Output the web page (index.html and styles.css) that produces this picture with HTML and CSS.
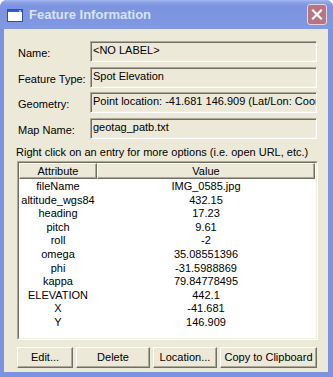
FILE: index.html
```html
<!DOCTYPE html>
<html lang="en">
<head>
    <meta charset="UTF-8">
    <title>Feature Information</title>
    <link rel="stylesheet" href="styles.css">
</head>
<body>

    <div class="window">
        <div class="titlebar">
            <svg class="app-icon" width="16" height="13" viewBox="0 0 16 13">
                <rect x="0.5" y="0.5" width="15" height="12" fill="#fff" stroke="#2b4fb8"/>
                <rect x="1" y="1" width="14" height="2" fill="#2b5fd9"/>
                <rect x="12" y="1.5" width="2" height="1" fill="#fff"/>
            </svg>
            <span class="title">Feature Information</span>
            <div class="close-btn">
                <svg width="20" height="21" viewBox="0 0 20 21">
                    <path d="M6 6.5 L14 14.5 M14 6.5 L6 14.5" stroke="#fff" stroke-width="2.2" stroke-linecap="square"/>
                </svg>
            </div>
        </div>

        <div class="client">
            <div class="fields">
                <label class="lbl">Name:</label>
                <div class="field">&lt;NO LABEL&gt;</div>
                <label class="lbl">Feature Type:</label>
                <div class="field">Spot Elevation</div>
                <label class="lbl">Geometry:</label>
                <div class="field">Point location: -41.681 146.909 (Lat/Lon: Coor</div>
                <label class="lbl">Map Name:</label>
                <div class="field">geotag_patb.txt</div>
            </div>

            <p class="hint">Right click on an entry for more options (i.e. open URL, etc.)</p>

            <div class="list">
                <div class="list-inner">
                    <div class="list-head">
                        <div class="col-head col-attr">Attribute</div>
                        <div class="col-head col-val">Value</div>
                    </div>
                    <div class="list-rows">
                        <div>fileName</div><div>IMG_0585.jpg</div>
                        <div>altitude_wgs84</div><div>432.15</div>
                        <div>heading</div><div>17.23</div>
                        <div>pitch</div><div>9.61</div>
                        <div>roll</div><div>-2</div>
                        <div>omega</div><div>35.08551396</div>
                        <div>phi</div><div>-31.5988869</div>
                        <div>kappa</div><div>79.84778495</div>
                        <div>ELEVATION</div><div>442.1</div>
                        <div>X</div><div>-41.681</div>
                        <div>Y</div><div>146.909</div>
                    </div>
                </div>
            </div>

            <div class="buttons">
                <button class="btn btn-edit">Edit...</button>
                <button class="btn btn-delete">Delete</button>
                <button class="btn btn-location">Location...</button>
                <button class="btn btn-copy">Copy to Clipboard</button>
            </div>
        </div>
    </div>

</body>
</html>
```

FILE: styles.css
```css
body {
    margin: 0;
    font-family: "Liberation Sans", Arial, sans-serif;
    font-size: 11px;
    color: #000;
    background: #fff;
}
.window {
    width: 333px;
    height: 377px;
    background: #7d93df; /* inactive XP frame */
    border-radius: 7px 7px 0 0;
    display: flex;
    flex-direction: column;
    overflow: hidden;
}
.titlebar {
    height: 29px;
    flex: none;
    display: flex;
    align-items: center;
    padding: 0 6px 0 7px;
    background: linear-gradient(#a9baf0 0, #8ea3e8 2px, #7c93df 6px, #7f96e1 22px, #8399e3 29px);
}
.app-icon {
    flex: none;
    margin-top: 1px;
}
.title {
    flex: 1;
    margin-left: 6px;
    font-size: 13px;
    font-weight: bold;
    color: #d8e2f8;
    white-space: nowrap;
}
.close-btn {
    width: 20px;
    height: 21px;
    border: 1px solid #e4d4e4;
    border-radius: 3px;
    box-sizing: border-box;
    background: #b97482;
    display: flex;
    align-items: center;
    justify-content: center;
}
.close-btn svg {
    display: block;
    margin: -1px;
}
.client {
    flex: 1;
    margin: 0 5px 5px 4px;
    background: #ece9d8;
    padding-top: 12px;
    display: flex;
    flex-direction: column;
}
.fields {
    display: grid;
    grid-template-columns: 72px 227px;
    grid-template-rows: repeat(4, 21px);
    row-gap: 4.67px;
    padding-left: 14px;
}
.lbl {
    padding-top: 6px;
    line-height: 13px;
    white-space: nowrap;
}
.field {
    box-sizing: border-box;
    height: 21px;
    padding: 2px 2px 0 2px;
    line-height: 13px;
    border: 1px solid;
    border-color: #aca899 #fff #fff #aca899;
    box-shadow: inset 1px 1px #716f64, inset -1px -1px #f1efe2;
    white-space: nowrap;
    overflow: hidden;
}
.hint {
    margin: 7px 0 0 12px;
    line-height: 13px;
    white-space: nowrap;
}
.list {
    margin: 2px 0 0 13px;
    width: 301px;
    height: 179px;
    box-sizing: border-box;
    border: 1px solid;
    border-color: #aca899 #fff #fff #aca899;
}
.list-inner {
    height: 100%;
    box-sizing: border-box;
    border: 1px solid;
    border-color: #716f64 #f1efe2 #f1efe2 #716f64;
    background: #fff;
}
.list-head {
    display: flex;
    height: 16px;
}
.col-head {
    box-sizing: border-box;
    height: 16px;
    line-height: 14px;
    text-align: center;
    background: #ece9d8;
    border: 1px solid;
    border-color: #fff #716f64 #716f64 #fff;
    box-shadow: inset -1px -1px #aca899;
}
.col-attr {
    width: 78px;
}
.col-val {
    width: 218px;
}
.list-rows {
    display: grid;
    grid-template-columns: 78px 218px;
    grid-auto-rows: 13.6px;
    padding-top: 1px;
    line-height: 13.6px;
    text-align: center;
    white-space: nowrap;
}
.buttons {
    display: flex;
    gap: 3px;
    margin: 7px 0 0 13px;
}
.btn {
    height: 21px;
    padding: 0;
    font-family: "Liberation Sans", Arial, sans-serif;
    font-size: 11px;
    color: #000;
    background: #ece9d8;
    border: 1px solid;
    border-color: #fff #716f64 #716f64 #fff;
    box-shadow: inset -1px -1px #aca899;
}
.btn-edit {
    width: 56px;
}
.btn-delete {
    width: 74px;
}
.btn-location {
    width: 64px;
}
.btn-copy {
    width: 97px;
}
```
